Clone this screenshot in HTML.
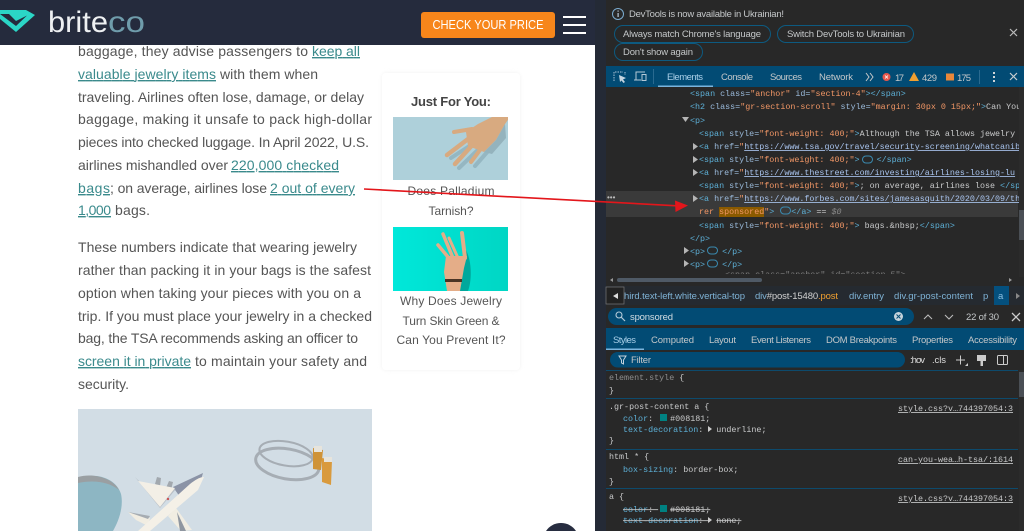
<!DOCTYPE html>
<html><head><meta charset="utf-8"><style>
html,body{margin:0;padding:0;background:#fff;width:1024px;height:531px;overflow:hidden}
svg{display:block}
.a{font-family:"Liberation Sans",sans-serif;font-size:14px;fill:#555}
.l{fill:#3a8a8c;text-decoration:underline}
.c{font-family:"Liberation Sans",sans-serif;font-size:12px;fill:#555}
.d{font-family:"Liberation Sans",sans-serif;font-size:9.5px;fill:#c4c7c9}
.m{font-family:"Liberation Mono",monospace;font-size:8.37px;fill:#c9cacb}
.t{fill:#5db0d7}.n{fill:#9bbbdc}.v{fill:#f29766}.u{fill:#a9c4ee;text-decoration:underline}
.p{fill:#5db0d7}.g{fill:#8a8a8a}
</style></head><body>
<svg xmlns="http://www.w3.org/2000/svg" width="1024" height="531" viewBox="0 0 1024 531">
<defs><filter id="b" x="-20%" y="-20%" width="140%" height="140%"><feGaussianBlur stdDeviation="2"/></filter>
<clipPath id="im1"><rect x="393" y="117" width="115" height="63"/></clipPath>
<clipPath id="im2"><rect x="393" y="227" width="115" height="64"/></clipPath>
<linearGradient id="cy" x1="0" x2="1"><stop offset="0" stop-color="#00e8da"/><stop offset="1" stop-color="#00d6c4"/></linearGradient>
</defs>
<rect width="1024" height="531" fill="#fff"/>

<!-- Article text -->
<g class="a">
<text class="a" x="78" y="56" textLength="230">baggage, they advise passengers to</text>
<text class="a l" x="312" y="56" textLength="48">keep all</text>
<text class="a l" x="78" y="79" textLength="138">valuable jewelry items</text>
<text class="a" x="220" y="79" textLength="98">with them when</text>
<text class="a" x="78" y="102" textLength="286">traveling. Airlines often lose, damage, or delay</text>
<text class="a" x="78" y="124" textLength="294">baggage, making it unsafe to pack high-dollar</text>
<text class="a" x="78" y="147" textLength="291">pieces into checked luggage. In April 2022, U.S.</text>
<text class="a" x="78" y="170" textLength="150">airlines mishandled over</text>
<text class="a l" x="231" y="170" textLength="108">220,000 checked</text>
<text class="a l" x="78" y="193" textLength="32">bags</text>
<text class="a" x="110" y="193" textLength="157">; on average, airlines lose</text>
<text class="a l" x="270" y="193" textLength="85">2 out of every</text>
<text class="a l" x="78" y="215" textLength="33">1,000</text>
<text class="a" x="115" y="215" textLength="35">bags.</text>
<text class="a" x="78" y="252" textLength="279">These numbers indicate that wearing jewelry</text>
<text class="a" x="78" y="275" textLength="293">rather than packing it in your bags is the safest</text>
<text class="a" x="78" y="298" textLength="283">option when taking your pieces with you on a</text>
<text class="a" x="78" y="321" textLength="294">trip. If you must place your jewelry in a checked</text>
<text class="a" x="78" y="343" textLength="280">bag, the TSA recommends asking an officer to</text>
<text class="a l" x="78" y="366" textLength="113">screen it in private</text>
<text class="a" x="195" y="366" textLength="172">to maintain your safety and</text>
<text class="a" x="78" y="389" textLength="51">security.</text>
</g>

<!-- Card -->
<rect x="382" y="73" width="138" height="297" rx="5" fill="#f0f0f0" filter="url(#b)"/>
<rect x="382" y="73" width="138" height="297" rx="4" fill="#fff"/>
<text x="451" y="106" text-anchor="middle" font-family="Liberation Sans" font-weight="bold" font-size="13px" fill="#444" textLength="80">Just For You:</text>
<rect x="393" y="117" width="115" height="63" fill="#aed0da"/>
<g clip-path="url(#im1)">
<g fill="none" stroke="#95b7c2" stroke-width="4" stroke-linecap="round" transform="translate(3 3)">
<path d="M474 138L448 155M480 142L456 165M486 147L472 163"/>
</g>
<path d="M492 117H510L505 124L496 140L484 152L468 146L466 132L478 124Z" fill="#d8aa80"/>
<path d="M505 124L496 140L484 152L492 154L506 138Z" fill="#94b3bd"/>
<g fill="none" stroke="#d8aa80" stroke-linecap="round">
<path d="M472 129L454 132" stroke-width="4"/>
<path d="M472 136L447 155" stroke-width="4.500"/>
<path d="M476 141L455 164" stroke-width="4.500"/>
<path d="M483 146L471 162" stroke-width="4"/>
</g>
</g>
<text class="c" x="451" y="195" text-anchor="middle" textLength="87">Does Palladium</text>
<text class="c" x="451" y="215" text-anchor="middle" textLength="45">Tarnish?</text>
<rect x="393" y="227" width="115" height="64" fill="url(#cy)"/>
<g clip-path="url(#im2)">
<path d="M466 250C472 262 472 280 468 291H460L462 262Z" fill="#00a89c"/>
<path d="M446 256H467L464 268L460 291H447L444 272Z" fill="#e4ad88"/>
<g fill="none" stroke="#e4ad88" stroke-linecap="round">
<path d="M438 245L448 257" stroke-width="3.500"/>
<path d="M443 234L453 258" stroke-width="3.500"/>
<path d="M449 238L458 258" stroke-width="3"/>
<path d="M462 233L465 258" stroke-width="4"/>
</g>
<rect x="445" y="279" width="17" height="3" fill="#4a3425"/>
</g>
<text class="c" x="451" y="305" text-anchor="middle" textLength="102">Why Does Jewelry</text>
<text class="c" x="451" y="325" text-anchor="middle" textLength="97">Turn Skin Green &amp;</text>
<text class="c" x="451" y="344" text-anchor="middle" textLength="109">Can You Prevent It?</text>

<!-- Article image -->
<rect x="78" y="409" width="294" height="122" fill="#d2dde5"/>
<path d="M78 478C96 472 116 478 121 494C124 508 118 522 113 531H78Z" fill="#8db6c3"/>
<path d="M78 477C92 473 112 477 119 490C108 481 92 480 78 483Z" fill="#9a9fa2"/>
<g transform="rotate(10 288 460)" fill="none" stroke="#a6adb4">
<ellipse cx="285" cy="454" rx="27" ry="12" stroke-width="2"/>
<ellipse cx="288" cy="464" rx="32" ry="15" stroke-width="3"/>
</g>
<path d="M313 448L323 450L321 470L313 469Z" fill="#cf9338"/>
<path d="M322 458L332 460L331 485L322 482Z" fill="#d99a3d"/>
<path d="M314 446H322V452H314ZM324 457H332V462H324Z" fill="#e7e4dc"/>
<!-- plane -->
<path d="M173 487L203 473L200 483L180 497Z" fill="#8b93a6"/>
<path d="M155 484L157 477L161 478L160 486ZM166 488L169 481L173 482L171 490Z" fill="#a2a8ae"/>
<path d="M135 477L140 482L176 489L160 508Z" fill="#a6acb2" opacity=".6"/>
<path d="M138 481L175 488L160 507Z" fill="#f3efe6"/>
<path d="M128 512L150 518L148 526L136 520Z" fill="#f1ede2"/>
<path d="M128 512L150 516L148 519Z" fill="#a6acb2"/>
<path d="M176 508L192 530L181 531L168 516Z" fill="#f1ede2"/>
<path d="M177 512L186 531H180Z" fill="#8f96a0"/>
<path d="M204 477L198 490L150 531H138L190 484C195 480 200 477 204 477Z" fill="#f4f0e7"/>
<circle cx="168" cy="499" r="1.200" fill="#c55"/>

<!-- Scroll button -->
<path d="M546 531A18 18 0 0 1 576 531Z" fill="#272d40"/>

<!-- Header -->
<rect width="596" height="45" fill="#252b3d"/>
<path d="M0 10H26L35 15L16 32L0 19Z" fill="#2bd6c6"/>
<path d="M0 14L9 14L16 21L27 15.500L16 26L0 14Z" fill="#252b3d"/>
<text x="48" y="32" font-family="Liberation Sans" font-size="30px" fill="#eef0f2" textLength="60" lengthAdjust="spacingAndGlyphs">brite</text>
<text x="108" y="32" font-family="Liberation Sans" font-size="30px" fill="#6f9cab" textLength="37" lengthAdjust="spacingAndGlyphs">co</text>
<rect x="421" y="12" width="134" height="26" rx="3" fill="#f7861b"/>
<text x="488" y="29" text-anchor="middle" font-family="Liberation Sans" font-size="12.5px" fill="#fff" textLength="111" lengthAdjust="spacingAndGlyphs">CHECK YOUR PRICE</text>
<rect x="563" y="16" width="23" height="2" fill="#fff"/><rect x="563" y="24" width="23" height="2" fill="#fff"/><rect x="563" y="32" width="23" height="2" fill="#fff"/>

<!-- DevTools -->
<rect x="595" y="0" width="429" height="531" fill="#282828"/>
<rect x="595" y="0" width="11" height="531" fill="#242a36"/>
<rect x="606" y="0" width="418" height="66" fill="#282828"/>
<circle cx="618" cy="14" r="5.500" fill="none" stroke="#7cacd0" stroke-width="1"/>
<rect x="617.500" y="13" width="1.200" height="4" fill="#bcd"/><rect x="617.500" y="10.500" width="1.200" height="1.200" fill="#bcd"/>
<text class="d" x="629" y="17" textLength="155">DevTools is now available in Ukrainian!</text>
<g fill="none" stroke="#0d5a80" stroke-width="1">
<rect x="614.500" y="25.500" width="156" height="17" rx="8.500"/>
<rect x="777.500" y="25.500" width="136" height="17" rx="8.500"/>
<rect x="614.500" y="43.500" width="88" height="17" rx="8.500"/>
</g>
<text class="d" x="623" y="37" textLength="138">Always match Chrome's language</text>
<text class="d" x="787" y="37" textLength="118">Switch DevTools to Ukrainian</text>
<text class="d" x="623" y="55" textLength="70">Don't show again</text>
<path d="M1010 29L1017 36M1017 29L1010 36" stroke="#bbb" stroke-width="1.200"/>

<!-- Tab bar -->
<rect x="606" y="66" width="418" height="21" fill="#024b74"/>
<path d="M614 81V72H623M625 72V75M614 72" fill="none" stroke="#a9c2d3" stroke-dasharray="1.500 1" stroke-width="1"/>
<path d="M619 75L626 78L623 79.500L625 82L623.500 83L621.500 80.500L620 82Z" fill="#c5d5e0"/>
<path d="M636 80V72H645M634 80H641" fill="none" stroke="#b4c8d6"/><rect x="642" y="74.500" width="4" height="6" fill="none" stroke="#b4c8d6"/>
<rect x="653" y="69" width="1" height="15" fill="#2a6a90"/>
<text class="d" x="667" y="80" textLength="36" style="fill:#a9cfe8">Elements</text>
<rect x="658" y="85.500" width="55" height="1.500" fill="#7ab5de"/>
<text class="d" x="721" y="80" textLength="32">Console</text>
<text class="d" x="770" y="80" textLength="32">Sources</text>
<text class="d" x="819" y="80" textLength="34">Network</text>
<path d="M866 73L869 77L866 81M870 73L873 77L870 81" fill="none" stroke="#c4c7c9"/>
<circle cx="886.500" cy="77" r="4" fill="#e8564b"/><path d="M885 75.500L888 78.500M888 75.500L885 78.500" stroke="#fff" stroke-width=".8"/>
<text class="d" x="895" y="81" textLength="9">17</text>
<path d="M914 72L919 81H909Z" fill="#f0a030"/>
<text class="d" x="922" y="81" textLength="15">429</text>
<rect x="946" y="73.500" width="8" height="7" fill="#e8873a"/>
<text class="d" x="957" y="81" textLength="14">175</text>
<rect x="979" y="70" width="1" height="14" fill="#2a6a90"/>
<rect x="993" y="72" width="2" height="2" fill="#d0d5d8"/><rect x="993" y="76" width="2" height="2" fill="#d0d5d8"/><rect x="993" y="80" width="2" height="2" fill="#d0d5d8"/>
<path d="M1010 73L1017 80M1017 73L1010 80" stroke="#c8cdd0" stroke-width="1.200"/>

<!-- Elements tree -->
<rect x="606" y="191" width="412" height="26" fill="#3a3a3a"/>
<rect x="719" y="207" width="45" height="10" fill="#8a5a00"/>
<text x="607" y="200" font-family="Liberation Sans" font-size="8px" fill="#bbb">•••</text>
<g class="m">
<text class="m" x="690" y="96"><tspan class="t">&lt;span </tspan><tspan class="n">class=</tspan><tspan class="v">"anchor" </tspan><tspan class="n">id=</tspan><tspan class="v">"section-4"</tspan><tspan class="t">&gt;&lt;/span&gt;</tspan></text>
<text class="m" x="690" y="109"><tspan class="t">&lt;h2 </tspan><tspan class="n">class=</tspan><tspan class="v">"gr-section-scroll" </tspan><tspan class="n">style=</tspan><tspan class="v">"margin: 30px 0 15px;"</tspan><tspan class="t">&gt;</tspan>Can You</text>
<text class="m" x="690" y="123"><tspan class="t">&lt;p&gt;</tspan></text>
<text class="m" x="699" y="136"><tspan class="t">&lt;span </tspan><tspan class="n">style=</tspan><tspan class="v">"font-weight: 400;"</tspan><tspan class="t">&gt;</tspan>Although the TSA allows jewelry</text>
<text class="m" x="699" y="149"><tspan class="t">&lt;a </tspan><tspan class="n">href=</tspan><tspan class="v">"</tspan><tspan class="u">https://www.tsa.gov/travel/security-screening/whatcanib</tspan></text>
<text class="m" x="699" y="162"><tspan class="t">&lt;span </tspan><tspan class="n">style=</tspan><tspan class="v">"font-weight: 400;"</tspan><tspan class="t">&gt;</tspan><tspan dx="17" class="t">&lt;/span&gt;</tspan></text>
<text class="m" x="699" y="175"><tspan class="t">&lt;a </tspan><tspan class="n">href=</tspan><tspan class="v">"</tspan><tspan class="u">https://www.thestreet.com/investing/airlines-losing-lu</tspan></text>
<text class="m" x="699" y="188"><tspan class="t">&lt;span </tspan><tspan class="n">style=</tspan><tspan class="v">"font-weight: 400;"</tspan><tspan class="t">&gt;</tspan>; on average, airlines lose <tspan class="t">&lt;/sp</tspan></text>
<text class="m" x="699" y="201"><tspan class="t">&lt;a </tspan><tspan class="n">href=</tspan><tspan class="v">"</tspan><tspan class="u">https://www.forbes.com/sites/jamesasquith/2020/03/09/th</tspan></text>
<text class="m" x="699" y="214"><tspan class="v">rer </tspan><tspan class="v">sponsored"</tspan><tspan class="t">&gt;</tspan><tspan dx="17" class="t">&lt;/a&gt;</tspan> == <tspan class="g" font-style="italic">$0</tspan></text>
<text class="m" x="699" y="228"><tspan class="t">&lt;span </tspan><tspan class="n">style=</tspan><tspan class="v">"font-weight: 400;"</tspan><tspan class="t">&gt;</tspan> bags.&amp;nbsp;<tspan class="t">&lt;/span&gt;</tspan></text>
<text class="m" x="690" y="241"><tspan class="t">&lt;/p&gt;</tspan></text>
<text class="m" x="690" y="254"><tspan class="t">&lt;p&gt;</tspan><tspan dx="17" class="t">&lt;/p&gt;</tspan></text>
<text class="m" x="690" y="267"><tspan class="t">&lt;p&gt;</tspan><tspan dx="17" class="t">&lt;/p&gt;</tspan></text>
</g>
<g fill="#b5b5b5">
<path d="M682 117H689L685.500 122Z"/>
<path d="M693 143L698 146.500L693 150Z"/>
<path d="M693 156L698 159.500L693 163Z"/>
<path d="M693 169L698 172.500L693 176Z"/>
<path d="M693 195L698 198.500L693 202Z"/>
<path d="M684 247L689 250.500L684 254Z"/>
<path d="M684 260L689 263.500L684 267Z"/>
</g>
<g fill="none" stroke="#3a8ab0" stroke-width="1">
<rect x="862.500" y="156" width="10" height="7" rx="3.500"/>
<rect x="780.500" y="207" width="10" height="7" rx="3.500"/>
<rect x="707.500" y="247" width="10" height="7" rx="3.500"/>
<rect x="707.500" y="260" width="10" height="7" rx="3.500"/>
</g>
<rect x="606" y="272" width="418" height="14" fill="#282828"/>
<text class="m" x="725" y="277" style="fill:#7d7d7d">&lt;span class="anchor" id="section-5"&gt;</text>
<rect x="606" y="274" width="412" height="12" fill="#282828"/>
<rect x="617" y="278" width="145" height="4" rx="2" fill="#4f5a66"/>
<path d="M613 278L610 280L613 282ZM1009 278L1012 280L1009 282Z" fill="#999"/>
<rect x="1019" y="87" width="5" height="190" fill="#2b2b2b"/><rect x="1019" y="210" width="5" height="30" fill="#4a4f55"/>

<!-- Breadcrumbs -->
<rect x="606" y="286" width="418" height="19" fill="#252a30"/>
<rect x="606" y="287" width="18" height="17" fill="#222" stroke="#777" stroke-width=".7"/>
<path d="M618 293L613 296L618 299Z" fill="#ddd"/>
<text class="d" x="624" y="299" textLength="121" style="fill:#7fb3d6">hird.text-left.white.vertical-top</text>
<text class="d" x="755" y="299" textLength="83" style="fill:#7fb3d6">div<tspan fill="#d0d0d0">#post-15480</tspan><tspan fill="#f0a030">.post</tspan></text>
<text class="d" x="849" y="299" textLength="35" style="fill:#7fb3d6">div.entry</text>
<text class="d" x="894" y="299" textLength="79" style="fill:#7fb3d6">div.gr-post-content</text>
<text class="d" x="983" y="299" style="fill:#7fb3d6">p</text>
<rect x="994" y="286" width="15" height="19" fill="#04507e"/>
<text class="d" x="998" y="299" style="fill:#8cc0e2">a</text>
<path d="M1016 293L1020 296L1016 299Z" fill="#888"/>

<!-- Search -->
<rect x="606" y="305" width="418" height="23" fill="#282828"/>
<rect x="608" y="308" width="306" height="17" rx="8.500" fill="#024b74"/>
<circle cx="619" cy="315" r="3" fill="none" stroke="#b5cbd9" stroke-width="1.100"/><path d="M621 317L625 321" stroke="#b5cbd9" stroke-width="1.200"/>
<text class="d" x="630" y="320" textLength="43" style="fill:#d4dde3">sponsored</text>
<circle cx="898.500" cy="316.500" r="4.500" fill="#c5d3dc"/><path d="M896.500 314.500L900.500 318.500M900.500 314.500L896.500 318.500" stroke="#024b74" stroke-width="1"/>
<path d="M924 319L928 315L932 319M945 315L949 319L953 315" fill="none" stroke="#bbb" stroke-width="1.100"/>
<text class="d" x="966" y="320" textLength="33">22 of 30</text>
<path d="M1012 313L1020 321M1020 313L1012 321" stroke="#ccc" stroke-width="1.300"/>

<!-- Styles tabs -->
<rect x="606" y="328" width="418" height="22" fill="#024b74"/>
<rect x="606" y="348.500" width="38" height="1.500" fill="#7ab5de"/>
<text class="d" x="613" y="343" textLength="23" style="fill:#a9cfe8">Styles</text>
<text class="d" x="651" y="343" textLength="43">Computed</text>
<text class="d" x="709" y="343" textLength="27">Layout</text>
<text class="d" x="751" y="343" textLength="60">Event Listeners</text>
<text class="d" x="826" y="343" textLength="71">DOM Breakpoints</text>
<text class="d" x="912" y="343" textLength="41">Properties</text>
<text class="d" x="968" y="343" textLength="49">Accessibility</text>

<!-- Filter -->
<rect x="610" y="352" width="295" height="15.500" rx="7.700" fill="#024b74"/>
<path d="M619 356H626L623.500 360V364L621.500 363V360Z" fill="none" stroke="#c5d3dc"/>
<text class="d" x="631" y="363" textLength="20">Filter</text>
<text class="d" x="910" y="363" textLength="15" style="fill:#ddd">:hov</text>
<text class="d" x="932" y="363" textLength="14" style="fill:#ddd">.cls</text>
<path d="M956 360H965M960.500 355.500V364.500" stroke="#ccc" stroke-width="1"/><path d="M968 366L965 366L968 363Z" fill="#ccc"/>
<rect x="977" y="355" width="9" height="6" fill="#ccc"/><rect x="980.500" y="361" width="2.500" height="5" fill="#ccc"/>
<rect x="997.500" y="355.500" width="10" height="9" rx="1" fill="none" stroke="#ccc"/><rect x="1003" y="356" width="1" height="8" fill="#ccc"/>

<!-- Rules -->
<g fill="#0d4a6c">
<rect x="606" y="370" width="412" height="1"/>
<rect x="606" y="398" width="412" height="1"/>
<rect x="606" y="449" width="412" height="1"/>
<rect x="606" y="488" width="412" height="1"/>
</g>
<rect x="1019" y="370" width="5" height="161" fill="#2b2b2b"/><rect x="1019" y="372" width="5" height="25" fill="#4a4f55"/>
<text class="m" x="609" y="380" style="fill:#8f8f8f">element.style <tspan fill="#ccc">{</tspan></text>
<text class="m" x="609" y="393">}</text>
<text class="m" x="609" y="409">.gr-post-content a {</text>
<text class="m" x="623" y="421"><tspan class="p">color</tspan>: <tspan dx="12">#008181;</tspan></text>
<rect x="660" y="414" width="7" height="7" fill="#008181"/>
<text class="m" x="623" y="432"><tspan class="p">text-decoration</tspan>: <tspan dx="8">underline;</tspan></text>
<path d="M708 426L712 429L708 432Z" fill="#ccc"/>
<text class="m" x="609" y="443">}</text>
<text class="m" x="609" y="459">html * {</text>
<text class="m" x="623" y="472"><tspan class="p">box-sizing</tspan>: border-box;</text>
<text class="m" x="609" y="484">}</text>
<text class="m" x="609" y="499">a {</text>
<text class="m" x="623" y="512" text-decoration="line-through"><tspan class="p">color</tspan>: <tspan dx="12">#008181;</tspan></text>
<rect x="660" y="505" width="7" height="7" fill="#008181"/>
<text class="m" x="623" y="523" text-decoration="line-through"><tspan class="p">text-decoration</tspan>: <tspan dx="8">none;</tspan></text>
<path d="M708 517L712 520L708 523Z" fill="#ccc"/>
<g>
<text class="m" x="898" y="411" textLength="115" text-decoration="underline">style.css?v…744397054:3</text>
<text class="m" x="898" y="462" textLength="115" text-decoration="underline">can-you-wea…h-tsa/:1614</text>
<text class="m" x="898" y="501" textLength="115" text-decoration="underline">style.css?v…744397054:3</text>
</g>

<!-- Red arrow -->
<path d="M364 189L677 205.800" stroke="#e3161b" stroke-width="1.600" fill="none"/>
<path d="M688 205.500L675 200.500L675.500 212Z" fill="#e3161b"/>
</svg>
</body></html>
